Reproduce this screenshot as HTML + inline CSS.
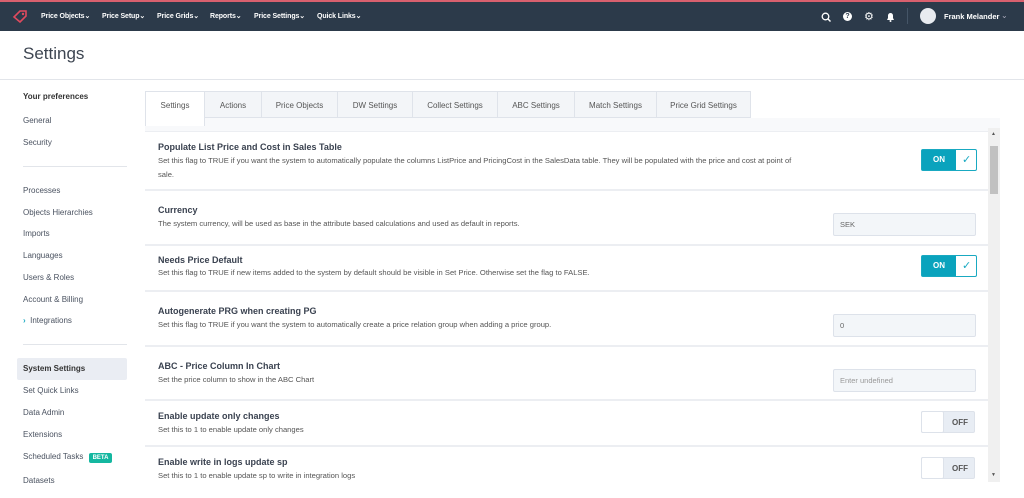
<!DOCTYPE html>
<html><head><style>
*{box-sizing:border-box;margin:0;padding:0}
body{width:1024px;height:498px;overflow:hidden;background:#fff;font-family:"Liberation Sans",sans-serif;color:#3d4551;position:relative}
.a{position:absolute}
.top{left:0;top:0;width:1024px;height:31px;background:#2c3a4a;border-top:2px solid #d9606e}
.nav{top:12px;font-size:7px;color:#fff;font-weight:bold;letter-spacing:-0.1px}
.side{left:23px;font-size:8px;color:#4a5260}
.tab{top:91px;height:35px;background:#f3f5f8;border:1px solid #dfe3ea;font-size:8px;color:#555;text-align:center;line-height:27px}
.row{left:145px;width:843px;background:#fff;border-bottom:2px solid #eceef2}
.t{position:absolute;left:13px;font-size:9px;font-weight:bold;color:#3a4250}
.d{position:absolute;left:13px;font-size:7.6px;color:#555;line-height:14px}
.on{position:absolute;left:776px;width:56px;height:22px;border-radius:2px;border:1px solid #19a9c1}
.on .l{position:absolute;left:0;top:0;width:34px;height:20px;background:#0aa3bd;color:#fff;font-size:8px;font-weight:bold;text-align:center;line-height:20px}
.off{position:absolute;left:776px;width:54px;height:22px;background:#e8edf4;border:1px solid #dde2ea;border-radius:2px;font-size:8px;color:#555;font-weight:bold}
.off .k{position:absolute;left:-1px;top:-1px;width:23px;height:22px;background:#fff;border:1px solid #dde2ea;border-radius:2px}
.inp{position:absolute;left:688px;width:143px;height:23px;background:#f3f6f9;border:1px solid #dde2ea;border-radius:2px;font-size:7.5px;color:#666;padding-left:6px;line-height:21px}
</style></head><body>
<div class="a top"></div>
<svg class="a" style="left:12px;top:9px" width="16" height="14" viewBox="0 0 16 14"><path d="M2 8 L8 2 L14 2 L14 7 L8 13 Z" fill="none" stroke="#e04a5e" stroke-width="1.6"/><circle cx="11" cy="5" r="1.2" fill="#e04a5e"/></svg>
<div class="a nav" style="left:41px">Price Objects⌄</div>
<div class="a nav" style="left:102px">Price Setup⌄</div>
<div class="a nav" style="left:157px">Price Grids⌄</div>
<div class="a nav" style="left:210px">Reports⌄</div>
<div class="a nav" style="left:254px">Price Settings⌄</div>
<div class="a nav" style="left:317px">Quick Links⌄</div>
<svg class="a" style="left:821px;top:12px" width="10" height="10"><circle cx="4.5" cy="4.5" r="3.3" fill="none" stroke="#fff" stroke-width="1.3"/><path d="M7 7 L9.5 9.5" stroke="#fff" stroke-width="1.4"/></svg>
<div class="a" style="left:843px;top:12px;width:9px;height:9px;border-radius:50%;background:#fff;color:#2c3a4a;font-size:7px;font-weight:bold;text-align:center;line-height:9px">?</div>
<div class="a" style="left:864px;top:10px;color:#fff;font-size:11px">⚙</div>
<svg class="a" style="left:886px;top:12px" width="9" height="10"><path d="M1 8 L8 8 L7 6 L7 3.5 A2.5 2.5 0 0 0 2 3.5 L2 6 Z" fill="#fff"/><circle cx="4.5" cy="9" r="1" fill="#fff"/></svg>
<div class="a" style="left:907px;top:8px;width:1px;height:16px;background:#455567"></div>
<div class="a" style="left:920px;top:8px;width:16px;height:16px;border-radius:50%;background:#e8ebf0"></div>
<div class="a" style="left:944px;top:12px;font-size:7.5px;color:#fff;font-weight:bold">Frank Melander</div>
<div class="a" style="left:1001px;top:11px;font-size:8px;color:#aab">⌄</div>
<div class="a" style="left:23px;top:44px;font-size:17px;color:#3d4551">Settings</div>
<div class="a" style="left:0;top:79px;width:1024px;height:1px;background:#e2e5ea"></div>
<div class="a side" style="top:92px;font-weight:bold;color:#333">Your preferences</div>
<div class="a side" style="top:116px">General</div>
<div class="a side" style="top:138px">Security</div>
<div class="a" style="left:23px;top:166px;width:104px;height:1px;background:#e2e5ea"></div>
<div class="a side" style="top:186px">Processes</div>
<div class="a side" style="top:208px">Objects Hierarchies</div>
<div class="a side" style="top:229px">Imports</div>
<div class="a side" style="top:251px">Languages</div>
<div class="a side" style="top:273px">Users &amp; Roles</div>
<div class="a side" style="top:295px">Account &amp; Billing</div>
<div class="a side" style="top:316px"><span style="color:#19a9c1;font-weight:bold">›</span>&nbsp;&nbsp;Integrations</div>
<div class="a" style="left:23px;top:344px;width:104px;height:1px;background:#e2e5ea"></div>
<div class="a" style="left:17px;top:358px;width:110px;height:22px;background:#eaedf3;border-radius:2px"></div>
<div class="a side" style="top:364px;font-weight:bold;color:#333">System Settings</div>
<div class="a side" style="top:386px">Set Quick Links</div>
<div class="a side" style="top:408px">Data Admin</div>
<div class="a side" style="top:430px">Extensions</div>
<div class="a side" style="top:452px">Scheduled Tasks <span style="background:#14b7a0;color:#fff;font-size:6px;font-weight:bold;padding:2px 4px;border-radius:2px;margin-left:3px">BETA</span></div>
<div class="a side" style="top:476px">Datasets</div>
<div class="a" style="left:145px;top:118px;width:855px;height:364px;background:#f8f9fb"></div>
<div class="a tab" style="left:145px;width:60px;background:#fff;border-bottom:none">Settings</div>
<div class="a tab" style="left:204px;width:58px;height:27px">Actions</div>
<div class="a tab" style="left:261px;width:77px;height:27px">Price Objects</div>
<div class="a tab" style="left:337px;width:76px;height:27px">DW Settings</div>
<div class="a tab" style="left:412px;width:86px;height:27px">Collect Settings</div>
<div class="a tab" style="left:497px;width:78px;height:27px">ABC Settings</div>
<div class="a tab" style="left:574px;width:83px;height:27px">Match Settings</div>
<div class="a tab" style="left:656px;width:95px;height:27px">Price Grid Settings</div>
<div class="a row" style="top:131px;height:60px;border-top:1px solid #eceef2"><div class="t" style="top:10px">Populate List Price and Cost in Sales Table</div><div class="d" style="top:22px;width:650px">Set this flag to TRUE if you want the system to automatically populate the columns ListPrice and PricingCost in the SalesData table. They will be populated with the price and cost at point of sale.</div><div class="on" style="top:17px"><div class="l">ON</div><span style="position:absolute;left:40px;top:3px;color:#19a9c1;font-size:11px">✓</span></div></div>
<div class="a row" style="top:191px;height:55px"><div class="t" style="top:14px">Currency</div><div class="d" style="top:26px">The system currency, will be used as base in the attribute based calculations and used as default in reports.</div><div class="inp" style="top:22px">SEK</div></div>
<div class="a row" style="top:246px;height:46px"><div class="t" style="top:9px">Needs Price Default</div><div class="d" style="top:20px">Set this flag to TRUE if new items added to the system by default should be visible in Set Price. Otherwise set the flag to FALSE.</div><div class="on" style="top:9px"><div class="l">ON</div><span style="position:absolute;left:40px;top:3px;color:#19a9c1;font-size:11px">✓</span></div></div>
<div class="a row" style="top:292px;height:55px"><div class="t" style="top:14px">Autogenerate PRG when creating PG</div><div class="d" style="top:26px">Set this flag to TRUE if you want the system to automatically create a price relation group when adding a price group.</div><div class="inp" style="top:22px">0</div></div>
<div class="a row" style="top:347px;height:54px"><div class="t" style="top:14px">ABC - Price Column In Chart</div><div class="d" style="top:26px">Set the price column to show in the ABC Chart</div><div class="inp" style="top:22px;color:#999">Enter undefined</div></div>
<div class="a row" style="top:401px;height:46px"><div class="t" style="top:10px">Enable update only changes</div><div class="d" style="top:22px">Set this to 1 to enable update only changes</div><div class="off" style="top:10px"><div class="k"></div><span style="position:absolute;left:30px;top:6px">OFF</span></div></div>
<div class="a row" style="top:447px;height:35px;border-bottom:none"><div class="t" style="top:10px">Enable write in logs update sp</div><div class="d" style="top:22px">Set this to 1 to enable update sp to write in integration logs</div><div class="off" style="top:10px"><div class="k"></div><span style="position:absolute;left:30px;top:6px">OFF</span></div></div>
<div class="a" style="left:988px;top:128px;width:12px;height:354px;background:#f0f0f0"></div>
<div class="a" style="left:990px;top:146px;width:8px;height:48px;background:#c1c1c1"></div>
<div class="a" style="left:991px;top:131px;font-size:5px;color:#555">▲</div>
<div class="a" style="left:991px;top:472px;font-size:5px;color:#555">▼</div>
</body></html>
